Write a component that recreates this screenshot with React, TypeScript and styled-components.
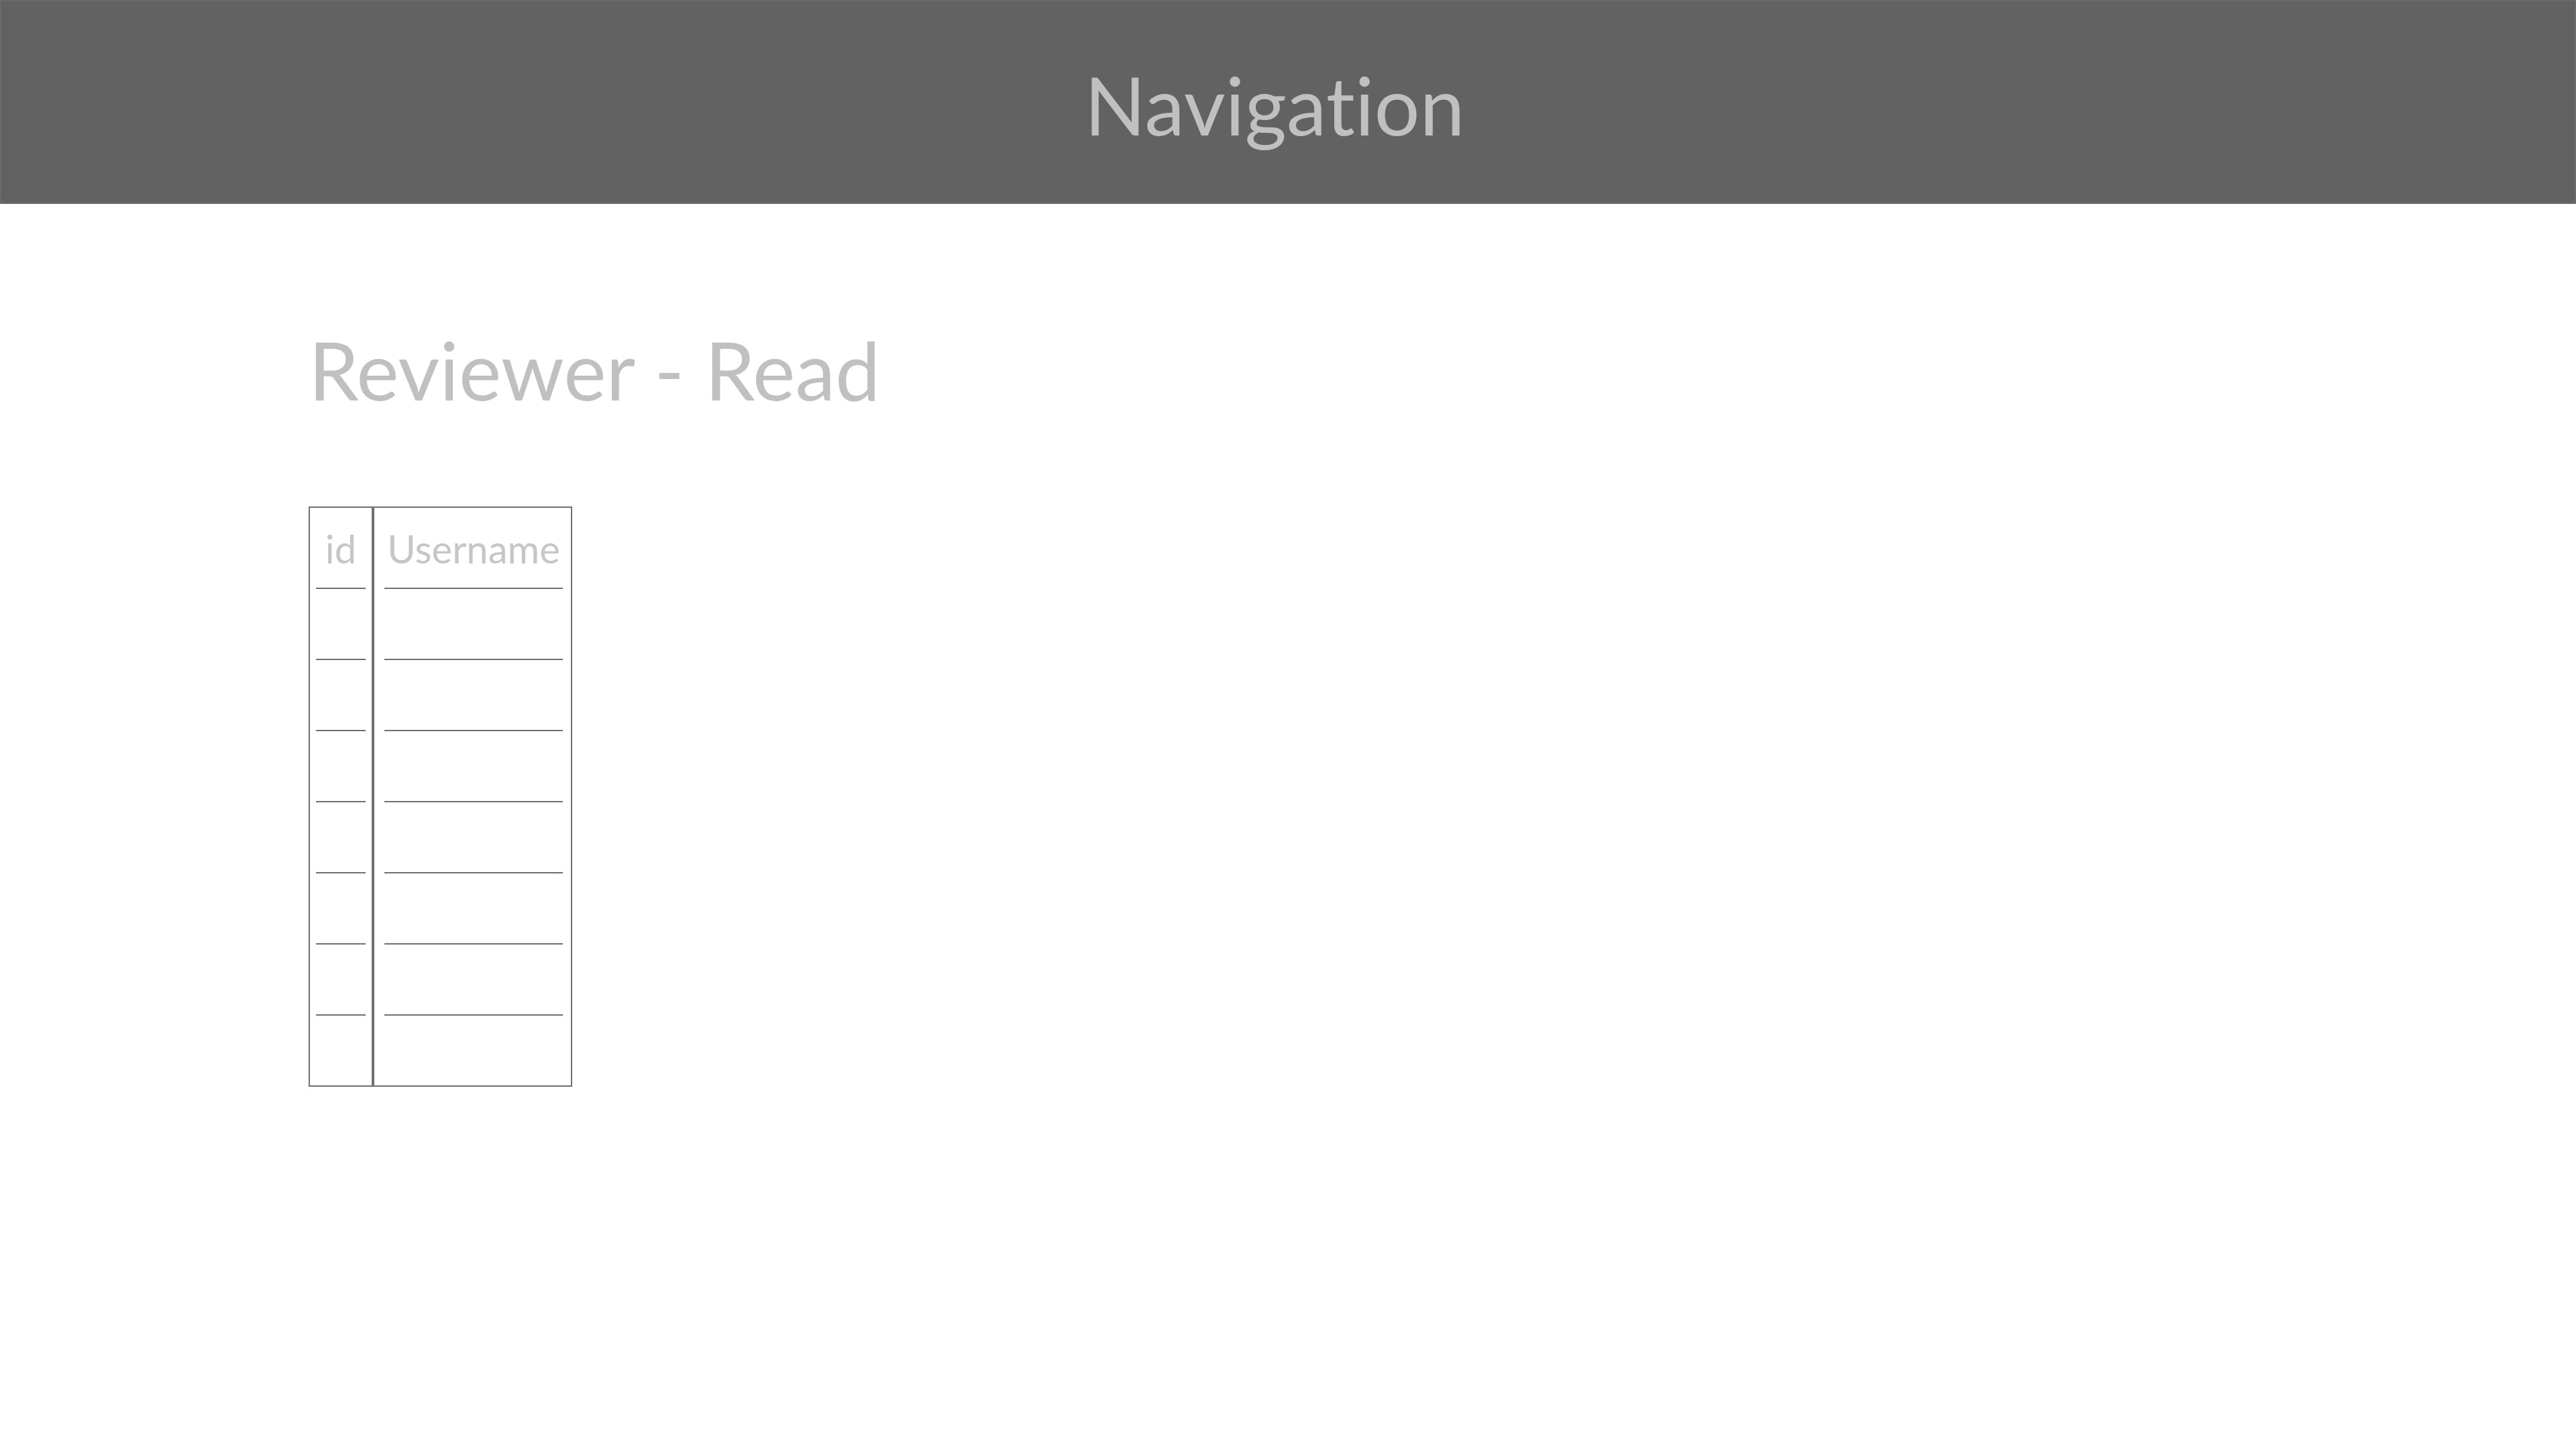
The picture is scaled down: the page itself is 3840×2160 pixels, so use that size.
import styled, { createGlobalStyle } from "styled-components";

const GlobalStyle = createGlobalStyle`
	html, body {
		margin: 0;
		padding: 0;
		background: #ffffff;
	}
	body {
		font-family: "Segoe UI", Lato, "Open Sans", sans-serif;
		font-variant-ligatures: none;
	}
`;

const columns = [
	{ key: "id", label: "id", width: 96, inset: "0 9px" },
	{ key: "username", label: "Username", width: 297, inset: "0 12px 0 15px" },
];

const rows = Array.from({ length: 6 }, (_, i) => ({ id: "", username: "", i }));

export default function App() {
	return (
		<>
			<GlobalStyle />
			<NavBar>
				<NavTitle>Navigation</NavTitle>
			</NavBar>
			<Main>
				<PageTitle>Reviewer - Read</PageTitle>
				<Table>
					{columns.map((col) => (
						<Column key={col.key} $width={col.width}>
							<HeaderCell $inset={col.inset}>{col.label}</HeaderCell>
							{rows.map((row) => (
								<Cell key={row.i} $inset={col.inset} />
							))}
							<Filler />
						</Column>
					))}
				</Table>
			</Main>
		</>
	);
}

const NavBar = styled.header`
	box-sizing: border-box;
	height: 304px;
	background: #626262;
	border: 2px solid #6b6b6b;
	padding: 94px 40px 0 0;
	text-align: center;
`;

const NavTitle = styled.h1`
	margin: 0;
	font-size: 120px;
	font-weight: 400;
	line-height: 120px;
	color: #c0c0c0;
`;

const Main = styled.main`
	padding: 187px 0 0 460px;
`;

const PageTitle = styled.h2`
	margin: 0 0 144px;
	font-size: 120px;
	font-weight: 400;
	line-height: 120px;
	color: #c0c0c0;
`;

const Table = styled.div`
	display: flex;
	align-items: stretch;
`;

const Column = styled.div<{ $width: number }>`
	box-sizing: border-box;
	width: ${({ $width }) => $width}px;
	border: 2px solid #707070;
	display: flex;
	flex-direction: column;
`;

const HeaderCell = styled.div<{ $inset: string }>`
	height: 87px;
	margin: ${({ $inset }) => $inset};
	padding-top: 32px;
	border-bottom: 2px solid #707070;
	text-align: center;
	font-size: 58px;
	line-height: 58px;
	color: #c6c6c6;
	white-space: nowrap;
`;

const Cell = styled.div<{ $inset: string }>`
	height: 104px;
	margin: ${({ $inset }) => $inset};
	border-bottom: 2px solid #707070;
`;

const Filler = styled.div`
	height: 104px;
`;
